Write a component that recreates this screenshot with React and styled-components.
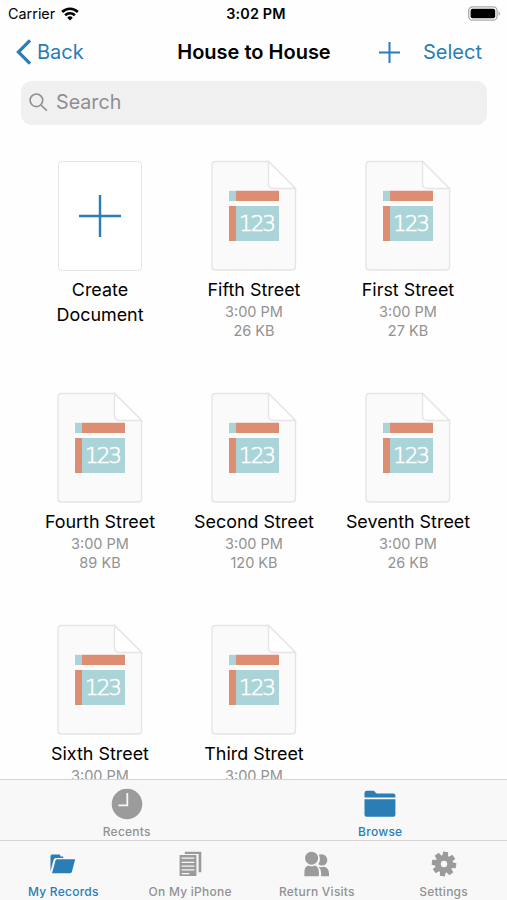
import React from "react";
import styled, { createGlobalStyle } from "styled-components";

const GlobalStyle = createGlobalStyle`
  * {
    box-sizing: border-box;
  }
  body {
    margin: 0;
    background: #fff;
    font-family: Inter, "Liberation Sans", sans-serif;
  }
`;

const blue = "#2a7db5";
const grey = "#9b9b9b";

const documents = [
  { name: "Fifth Street", time: "3:00 PM", size: "26 KB" },
  { name: "First Street", time: "3:00 PM", size: "27 KB" },
  { name: "Fourth Street", time: "3:00 PM", size: "89 KB" },
  { name: "Second Street", time: "3:00 PM", size: "120 KB" },
  { name: "Seventh Street", time: "3:00 PM", size: "26 KB" },
  { name: "Sixth Street", time: "3:00 PM" },
  { name: "Third Street", time: "3:00 PM" },
];

const WifiIcon = () => (
  <svg width="18" height="14" viewBox="0 0 17 13" fill="none" stroke="#000" strokeWidth="2.5">
    <path d="M1.1 4.6a10.6 10.6 0 0 1 14.8 0" />
    <path d="M3.9 7.7a6.6 6.6 0 0 1 9.2 0" />
    <path d="M8.5 12.6 5.9 10a3.7 3.7 0 0 1 5.2 0z" fill="#000" stroke="none" />
  </svg>
);

const BatteryIcon = () => (
  <svg width="33" height="16" viewBox="0 0 33 16">
    <rect x="0.7" y="0.8" width="28.4" height="13.4" rx="4" fill="#fff" stroke="#a9a9a9" strokeWidth="1.3" />
    <rect x="2.6" y="2.7" width="24.6" height="9.6" rx="2" fill="#000" />
    <path d="M30.6 5.2c1.8.8 1.8 3.8 0 4.6z" fill="#a0a0a0" />
  </svg>
);

const BackIcon = () => (
  <svg width="16" height="26" viewBox="0 0 16 26" fill="none" stroke={blue} strokeWidth="3.2">
    <path d="M14 1.3 2.4 13 14 24.7" />
  </svg>
);

const AddIcon = ({ size, stroke }) => (
  <svg width={size} height={size} viewBox={`0 0 ${size} ${size}`} stroke={blue} strokeWidth={stroke}>
    <path d={`M${size / 2} 0V${size}M0 ${size / 2}H${size}`} />
  </svg>
);

const SearchIcon = () => (
  <svg width="19" height="19" viewBox="0 0 19 19" fill="none" stroke="#8e8e93" strokeWidth="1.6">
    <circle cx="7.4" cy="7.3" r="6.3" />
    <path d="m12 12 5.8 5.6" />
  </svg>
);

const FileIcon = () => (
  <svg width="86" height="111" viewBox="0 0 86 111">
    <path
      d="M4.5 1.5H57.500L84.500 28.500V106.500q0 3.500-3.500 3.500H4.500Q1 110 1 106.500V5Q1 1.500 4.500 1.500z"
      fill="#fafafa"
      stroke="#e5e5e5"
      strokeWidth="1.4"
    />
    <path d="M57.500 1.500V23.500q0 5 5 5H84.500z" fill="#fff" stroke="#e5e5e5" strokeWidth="1.4" />
    <path d="M18 30.800h8v10.200h-8z" fill="#aad4d7" />
    <path d="M25 30.800h43v10.200H25z" fill="#dd8e72" />
    <path d="M18 46h8v35h-8z" fill="#dd8e72" />
    <path d="M25 46h43v35H25z" fill="#aad4d7" />
    <FileDigits x="46.500" y="71" textLength="37">
      123
    </FileDigits>
  </svg>
);

const ClockIcon = () => (
  <svg width="32" height="32" viewBox="0 0 32 32">
    <circle cx="16" cy="16" r="15.3" fill={grey} />
    <path d="M16.3 5v12.300H7.500" fill="none" stroke="#f8f8f8" strokeWidth="1.8" />
  </svg>
);

const FolderIcon = () => (
  <svg width="32" height="28" viewBox="0 0 32 28" fill={blue}>
    <path d="M.5 7.500V3Q.5.800 2.700.800h6.200q1.300 0 2 1l.5.700q.7 1 2 1h15.800q2.200 0 2.200 2v2z" />
    <path d="M.5 9.300h30.900v15.500q0 2-2 2H2.500q-2 0-2-2z" />
  </svg>
);

const OpenFolderIcon = () => (
  <svg width="26" height="20" viewBox="0 0 26 20" fill={blue}>
    <path d="M.5 17.500V2Q.5.500 2 .500H9q1.200 0 1.400 1.200l.2.800h2.600V4H6q-2 0-2.500 2z" />
    <path d="M7.200 5.300H25.200L21.900 17.800q-.4 1.400-1.800 1.400H2L5.500 6.700q.4-1.400 1.700-1.400z" />
  </svg>
);

const PagesIcon = () => (
  <svg width="23" height="26" viewBox="0 0 23 26" fill={grey}>
    <path d="M5.8.700h16.500v20.600h-2.700V3.100H5.800z" />
    <path d="M.6 4h16.800v21H.6z" />
    <path
      d="M2.700 7.200h12.600M2.700 11.300h12.600M2.700 15.100h12.600M2.700 18.900h12.600M2.700 22.600h7.500"
      stroke="#f8f8f8"
      strokeWidth="1.3"
    />
  </svg>
);

const PeopleIcon = () => (
  <svg width="26" height="26" viewBox="0 0 26 26" fill={grey}>
    <circle cx="7.600" cy="7.200" r="6.500" />
    <path d="M.4 25.200v-3.500Q.4 15 4.500 14.500q3.200 1.700 6.400 0 3.900.8 4 7.200v3.500z" />
    <path d="M14.900 3.700q2.800-1.200 5.400.2 3.200 2 3 5.600-.6 4.800-5.300 5.100-2.500 0-3.700-1.500 2.900-4.500.6-9.400z" />
    <path d="M14.300 15.500q2.800 1.200 5.700.2 5 .9 5 7v2.500h-7.900v-3.500q0-4-2.800-6.200z" />
  </svg>
);

const GearIcon = () => (
  <svg width="26" height="26" viewBox="-13 -13 26 26" fill={grey}>
    <g transform="rotate(8)">
      {[0, 45, 90, 135, 180, 225, 270, 315].map((angle) => (
        <path key={angle} d="M-3-7-2.500-12.200H2.500L3-7z" transform={`rotate(${angle})`} />
      ))}
    </g>
    <circle r="6.100" fill="none" stroke={grey} strokeWidth="5.800" />
  </svg>
);

const App = () => {
  return (
    <Screen>
      <GlobalStyle />
      <StatusBar>
        <Carrier>
          <span>Carrier</span>
          <WifiIcon />
        </Carrier>
        <Clock>3:02 PM</Clock>
        <Battery>
          <BatteryIcon />
        </Battery>
      </StatusBar>
      <NavBar>
        <BackButton>
          <BackIcon />
          <span>Back</span>
        </BackButton>
        <Title>House to House</Title>
        <Actions>
          <AddIcon size={21} stroke={2} />
          <NavButton>Select</NavButton>
        </Actions>
      </NavBar>
      <SearchField>
        <SearchIcon />
        <span>Search</span>
      </SearchField>
      <Browser>
        <Item>
          <NewDocument>
            <AddIcon size={42} stroke={2.4} />
          </NewDocument>
          <Name>
            Create
            <br />
            Document
          </Name>
        </Item>
        {documents.map((doc) => (
          <Item key={doc.name}>
            <FileIcon />
            <Name>{doc.name}</Name>
            <Detail>{doc.time}</Detail>
            {doc.size && <Detail>{doc.size}</Detail>}
          </Item>
        ))}
      </Browser>
      <BrowserTabs>
        <Tab>
          <TabIcon $height={32} $top={7.5}>
            <ClockIcon />
          </TabIcon>
          <TabLabel>Recents</TabLabel>
        </Tab>
        <Tab $active>
          <TabIcon $height={32} $top={7.5}>
            <FolderIcon />
          </TabIcon>
          <TabLabel>Browse</TabLabel>
        </Tab>
      </BrowserTabs>
      <AppTabs>
        <Tab $active>
          <TabIcon $height={26} $top={9.5}>
            <OpenFolderIcon />
          </TabIcon>
          <TabLabel>My Records</TabLabel>
        </Tab>
        <Tab>
          <TabIcon $height={26} $top={9.5}>
            <PagesIcon />
          </TabIcon>
          <TabLabel>On My iPhone</TabLabel>
        </Tab>
        <Tab>
          <TabIcon $height={26} $top={9.5}>
            <PeopleIcon />
          </TabIcon>
          <TabLabel>Return Visits</TabLabel>
        </Tab>
        <Tab>
          <TabIcon $height={26} $top={9.5}>
            <GearIcon />
          </TabIcon>
          <TabLabel>Settings</TabLabel>
        </Tab>
      </AppTabs>
    </Screen>
  );
};

const Screen = styled.div`
  display: flex;
  flex-direction: column;
  width: 507px;
  height: 900px;
  overflow: hidden;
  background: #fefefe;
  color: #000;
`;

const StatusBar = styled.header`
  display: grid;
  grid-template-columns: 1fr auto 1fr;
  align-items: center;
  height: 27px;
  padding: 0 6px 0 8px;
  font-size: 14.4px;
`;

const Carrier = styled.div`
  display: flex;
  align-items: center;
  gap: 6px;
`;

const Clock = styled.div`
  margin: 0 -1.5px 0 1.5px;
  font-weight: 600;
  letter-spacing: 0.15px;
`;

const Battery = styled.div`
  display: flex;
  justify-content: flex-end;
`;

const NavBar = styled.nav`
  display: grid;
  grid-template-columns: 1fr auto 1fr;
  align-items: center;
  height: 50px;
  padding: 0 25px 0 16px;
  font-size: 20px;
`;

const NavButton = styled.span`
  color: ${blue};
`;

const BackButton = styled(NavButton)`
  display: flex;
  align-items: center;
  gap: 5px;
`;

const Title = styled.h1`
  margin: 0 -5px 0 5px;
  font-size: 20px;
  font-weight: 600;
`;

const Actions = styled.div`
  display: flex;
  align-items: center;
  justify-content: flex-end;
  gap: 23px;
`;

const SearchField = styled.div`
  display: flex;
  flex-shrink: 0;
  align-items: center;
  gap: 8px;
  height: 44px;
  margin: 4px 20px 0 21px;
  padding: 0 0 2px 8px;
  border-radius: 11px;
  background: #f0f0f1;
  color: #8e8e93;
  font-size: 19.7px;
`;

const Browser = styled.main`
  display: grid;
  flex: 1;
  grid-template-columns: repeat(3, 154px);
  grid-auto-rows: 232px;
  min-height: 0;
  padding: 35px 0 0 23px;
  overflow: hidden;
`;

const Item = styled.div`
  display: flex;
  flex-direction: column;
  align-items: center;
  svg {
    flex-shrink: 0;
  }
`;

const NewDocument = styled.div`
  display: flex;
  align-items: center;
  justify-content: center;
  width: 84px;
  height: 110px;
  margin-top: 1px;
  border: 1.5px solid #e3e3e3;
  border-radius: 4px;
  background: #fff;
`;

const FileDigits = styled.text`
  fill: #fff;
  stroke: #fff;
  stroke-width: 0.6px;
  font-family: "DejaVu Sans", sans-serif;
  font-size: 21.5px;
  font-weight: 200;
  text-anchor: middle;
`;

const Name = styled.div`
  margin-top: 7px;
  font-size: 17.9px;
  line-height: 24.5px;
  text-align: center;
`;

const Detail = styled.div`
  color: #929292;
  font-size: 14.5px;
  line-height: 19.5px;
  &:nth-of-type(2) {
    margin-top: -1px;
  }
`;

const TabBar = styled.div`
  display: flex;
  flex-shrink: 0;
  border-top: 1px solid #d4d4d4;
  background: #f8f8f8;
`;

const BrowserTabs = styled(TabBar)`
  height: 61px;
`;

const AppTabs = styled(TabBar)`
  height: 60px;
`;

const Tab = styled.div`
  display: flex;
  flex: 1;
  flex-direction: column;
  align-items: center;
  justify-content: space-between;
  color: ${(props) => (props.$active ? blue : "#929292")};
`;

const TabIcon = styled.div`
  display: flex;
  align-items: center;
  height: ${(props) => props.$height}px;
  margin-top: ${(props) => props.$top}px;
`;

const TabLabel = styled.span`
  font-size: 12px;
  font-weight: 500;
  letter-spacing: 0.25px;
  line-height: 16px;
`;

export default App;
